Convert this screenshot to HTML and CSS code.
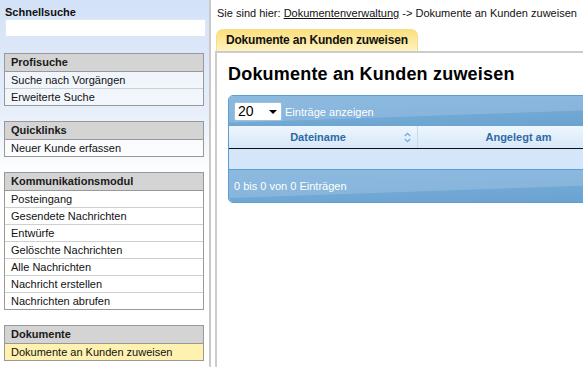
FILE: index.html
```html
<!DOCTYPE html>
<html lang="de">
<head>
<meta charset="utf-8">
<title>Dokumente an Kunden zuweisen</title>
<link rel="stylesheet" href="styles.css">
</head>
<body>
<aside class="sidebar">
  <div class="quick">
    <div class="quick-title">Schnellsuche</div>
    <input class="quick-input" type="text">
  </div>
  <div class="box">
    <div class="box-head">Profisuche</div>
    <div class="box-item">Suche nach Vorgängen</div>
    <div class="box-item">Erweiterte Suche</div>
  </div>
  <div class="box">
    <div class="box-head">Quicklinks</div>
    <div class="box-item">Neuer Kunde erfassen</div>
  </div>
  <div class="box">
    <div class="box-head">Kommunikationsmodul</div>
    <div class="box-item">Posteingang</div>
    <div class="box-item">Gesendete Nachrichten</div>
    <div class="box-item">Entwürfe</div>
    <div class="box-item">Gelöschte Nachrichten</div>
    <div class="box-item">Alle Nachrichten</div>
    <div class="box-item">Nachricht erstellen</div>
    <div class="box-item">Nachrichten abrufen</div>
  </div>
  <div class="box">
    <div class="box-head">Dokumente</div>
    <div class="box-item active">Dokumente an Kunden zuweisen</div>
  </div>
</aside>
<main class="main">
  <div class="crumb">Sie sind hier: <a href="#" class="crumb-link">Dokumentenverwaltung</a> -&gt; Dokumente an Kunden zuweisen</div>
  <div class="tab">Dokumente an Kunden zuweisen</div>
  <section class="panel">
    <h1 class="title">Dokumente an Kunden zuweisen</h1>
    <div class="grid">
      <div class="toolbar">
        <div class="select"><span class="select-val">20</span>
          <svg class="select-arrow" width="8" height="4" viewBox="0 0 8 4"><path d="M0 0H8L4 4Z" fill="#000"/></svg>
        </div>
        <span class="toolbar-text">Einträge anzeigen</span>
      </div>
      <table class="table">
        <thead>
          <tr>
            <th class="col1">Dateiname
              <svg class="sort" width="7" height="11" viewBox="0 0 7 11"><path d="M0.8 4L3.5 1.3L6.2 4M0.8 7L3.5 9.7L6.2 7" fill="none" stroke="#79acd9" stroke-width="1.3"/></svg>
            </th>
            <th class="col2">Angelegt am</th>
          </tr>
        </thead>
        <tbody>
          <tr><td class="empty" colspan="2"></td></tr>
        </tbody>
      </table>
      <div class="footer">0 bis 0 von 0 Einträgen</div>
    </div>
  </section>
</main>
</body>
</html>
```
FILE: styles.css
```css
html, body {
  margin: 0;
  height: 100%;
  overflow: hidden;
}
body {
  display: flex;
  font-family: "Liberation Sans", Arial, sans-serif;
  font-size: 11px;
  color: #111;
  background: #fff;
}
.sidebar {
  flex-shrink: 0;
  width: 211px;
  box-sizing: border-box;
  border-right: 2px solid #c9c9c9;
  background: linear-gradient(#d3e2f8 0, #e6eefa 110px, #ffffff 175px);
  padding-left: 4px;
}
.quick {
  padding-left: 1px;
}
.quick-title {
  font-weight: bold;
  padding-top: 6px;
  line-height: 13px;
}
.quick-input {
  display: block;
  width: 201px;
  height: 18px;
  box-sizing: border-box;
  border: 1px solid #dfe6ef;
  background: #fff;
  margin: 0 0 16px 0;
  padding: 0;
}
.box {
  width: 200px;
  box-sizing: border-box;
  border: 1px solid #999;
  margin-bottom: 15px;
  background: rgba(255, 255, 255, 0.5);
}
.box-head {
  background: #d4d4d4;
  border-bottom: 1px solid #999;
  line-height: 17px;
  padding: 0 6px;
  font-weight: bold;
  color: #1a1a1a;
}
.box-item {
  line-height: 16px;
  padding: 0 6px;
  color: #111;
}
.box-item + .box-item {
  border-top: 1px solid #cfcfcf;
}
.box-item.active {
  background: #fff1b0;
}
.main {
  flex: 1;
  min-width: 0;
  display: flex;
  flex-direction: column;
  padding-left: 4px;
}
.crumb {
  padding: 5px 0 0 2px;
  line-height: 16px;
  white-space: nowrap;
  color: #111;
}
.crumb-link {
  color: #111;
  text-decoration: underline;
}
.tab {
  align-self: flex-start;
  margin: 8px 0 0 1px;
  padding: 0 9px;
  line-height: 21px;
  font-size: 12px;
  font-weight: bold;
  letter-spacing: -0.2px;
  white-space: nowrap;
  color: #111;
  border: 1px solid #f3df8e;
  border-bottom: none;
  border-radius: 7px 7px 0 0;
  background: linear-gradient(#fbe07e 0%, #fde89a 45%, #fef2c0 100%);
}
.panel {
  flex: 1;
  border: 2px solid #cccccc;
  border-right: none;
  border-bottom: none;
  padding: 10px 0 0 11px;
  min-width: 0;
}
.title {
  margin: 0;
  font-size: 18px;
  line-height: 22px;
  font-weight: bold;
  letter-spacing: 0.2px;
  color: #000;
  white-space: nowrap;
}
.grid {
  margin-top: 10px;
  width: 400px;
  border: 1px solid #5e9dd1;
  border-radius: 5px;
  overflow: hidden;
}
.toolbar {
  display: flex;
  align-items: center;
  padding: 6px 5px 5px;
  background: linear-gradient(178deg, #8cbadf 0%, #87b5dc 60%, #71a8d4 62%, #6aa2d0 100%);
}
.select {
  width: 48px;
  height: 19px;
  box-sizing: border-box;
  border: 1px solid #9fbfdd;
  border-radius: 2px;
  background: #fff;
  display: flex;
  align-items: center;
  justify-content: space-between;
  padding: 0 4px 0 3px;
}
.select-val {
  font-size: 14px;
  color: #000;
  line-height: 17px;
}
.toolbar-text {
  color: #fff;
  margin-left: 3px;
}
.table {
  width: 100%;
  border-collapse: collapse;
}
.table th {
  height: 22px;
  padding: 0 10px 0 0;
  font-weight: bold;
  color: #2f6aa4;
  text-align: center;
  background: linear-gradient(#eef6fd 0%, #e2effb 50%, #d6e7f8 100%);
  border-bottom: 1px solid #111;
}
.col1 {
  width: 178px;
  position: relative;
  border-right: 1px solid #c4daef;
}
.sort {
  position: absolute;
  right: 6px;
  top: 6px;
}
.empty {
  height: 20px;
  padding: 0;
  background: #d6e6fa;
}
.footer {
  border-top: 1px solid #5e9dd1;
  padding: 8px 5px;
  line-height: 16px;
  color: #fff;
  background: linear-gradient(178deg, #8cbadf 0%, #87b5dc 60%, #71a8d4 62%, #6aa2d0 100%);
}
```
